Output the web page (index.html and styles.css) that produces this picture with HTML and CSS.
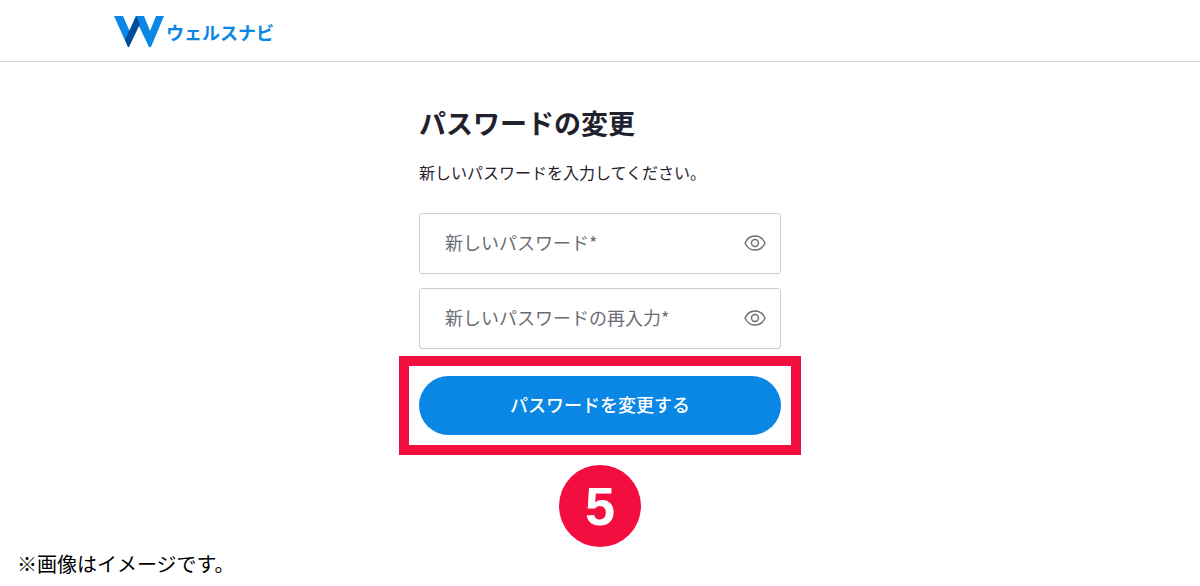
FILE: index.html
```
<!DOCTYPE html>
<html lang="ja">
<head>
    <meta charset="UTF-8">
    <meta name="viewport" content="width=device-width, initial-scale=1.0">
    <title>パスワードの変更</title>
    <link rel="stylesheet" href="styles.css">
</head>
<body>
    <header class="header">
        <a class="logo" href="#">
            <svg class="logo-mark" viewBox="0 0 50 31" aria-hidden="true">
                <path d="M0 0H9L16 16L22 0H30L36 15L42 0H50L37 31H35L24 8L14 31Z" fill="#0a86e6"/>
                <path d="M22 0L11 24L14 31H15L26 8Z" fill="#004d97"/>
            </svg>
            <span class="logo-text">ウェルスナビ</span>
        </a>
    </header>

    <main class="main">
        <form class="password-form">
            <h1 class="title">パスワードの変更</h1>
            <p class="lead">新しいパスワードを入力してください。</p>

            <div class="field">
                <input type="password" id="new-password" aria-label="新しいパスワード" placeholder="新しいパスワード*">
                <button type="button" class="eye-btn" aria-label="パスワードを表示">
                    <svg class="eye" viewBox="0 0 22 16" aria-hidden="true">
                        <path d="M1 8C3 3.5 6.5 1 11 1S19 3.5 21 8C19 12.5 15.5 15 11 15S3 12.5 1 8Z"/>
                        <circle cx="11" cy="8" r="3.5"/>
                    </svg>
                </button>
            </div>
            <div class="field">
                <input type="password" id="confirm-password" aria-label="新しいパスワードの再入力" placeholder="新しいパスワードの再入力*">
                <button type="button" class="eye-btn" aria-label="パスワードを表示">
                    <svg class="eye" viewBox="0 0 22 16" aria-hidden="true">
                        <path d="M1 8C3 3.5 6.5 1 11 1S19 3.5 21 8C19 12.5 15.5 15 11 15S3 12.5 1 8Z"/>
                        <circle cx="11" cy="8" r="3.5"/>
                    </svg>
                </button>
            </div>

            <div class="highlight">
                <button type="button" class="submit-btn">パスワードを変更する</button>
            </div>
        </form>
        <div class="step">5</div>
    </main>

    <p class="note">※画像はイメージです。</p>
</body>
</html>
```
FILE: styles.css
```
* {
    box-sizing: border-box;
}
body {
    margin: 0;
    background-color: #fff;
    color: #1f222d;
    font-family: "Noto Sans CJK JP", sans-serif;
}
input,
button {
    font-family: inherit;
}
.header {
    display: flex;
    padding: 16px 114px 14px;
    border-bottom: 1px solid #d9d9dc;
}
.logo {
    display: flex;
    align-items: center;
    gap: 2px;
    color: #0a86e6;
    text-decoration: none;
}
.logo-mark {
    width: 50px;
    height: 31px;
}
.logo-text {
    font-size: 18px;
    font-weight: bold;
    line-height: 28px;
}
.main {
    padding: 41px 20px 0;
}
.password-form {
    max-width: 362px;
    margin: 0 auto;
}
.title {
    margin: 0;
    font-size: 27px;
    line-height: 40px;
}
.lead {
    margin: 18px 0 30px;
    font-size: 16px;
    line-height: 22px;
}
.field {
    display: flex;
    align-items: center;
    height: 61px;
    margin-bottom: 14px;
    padding: 0 14px 2px 25px;
    border: 1px solid #cdcdd2;
    border-radius: 3px;
}
.field input {
    flex: 1;
    min-width: 0;
    padding: 0 0 2px;
    border: none;
    outline: none;
    background: none;
    font-size: 18px;
    line-height: 28px;
}
.field input::placeholder {
    color: #6b6c75;
    opacity: 1;
}
.eye-btn {
    display: flex;
    padding: 0;
    border: none;
    background: none;
    cursor: pointer;
}
.eye {
    width: 22px;
    height: 16px;
    fill: none;
    stroke: #6b6c75;
    stroke-width: 1.4;
}
.highlight {
    margin: -7px -20px 0;
    padding: 10px;
    border: 10px solid #f20f3f;
}
.submit-btn {
    display: block;
    width: 100%;
    height: 59px;
    padding: 0 0 3px;
    border: none;
    border-radius: 30px;
    background-color: #0a86e4;
    color: #fff;
    font-size: 18px;
    font-weight: 500;
    cursor: pointer;
}
.step {
    display: flex;
    justify-content: center;
    align-items: center;
    width: 82px;
    height: 82px;
    margin: 10px auto 0;
    border-radius: 50%;
    background-color: #f20f3f;
    color: #fff;
    font-family: "Liberation Sans", Arial, sans-serif;
    font-size: 54px;
    font-weight: bold;
}
.note {
    margin: 0;
    padding: 2px 17px 8px;
    color: #000;
    font-size: 20px;
    line-height: 29px;
}
```
